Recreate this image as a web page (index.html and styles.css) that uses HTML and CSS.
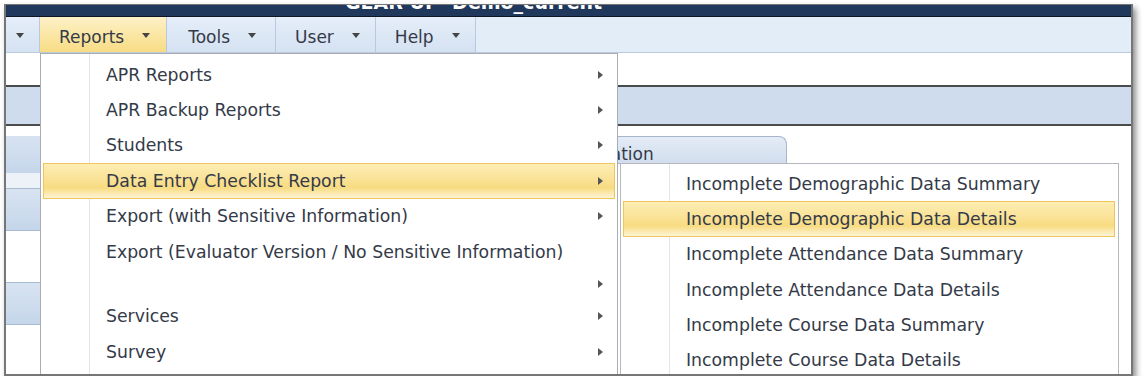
FILE: index.html
```html
<!DOCTYPE html>
<html lang="en">
<head>
    <meta charset="UTF-8">
    <meta name="viewport" content="width=device-width, initial-scale=1.0">
    <title>GEAR UP - Reports</title>
    <link rel="stylesheet" href="styles.css">
</head>
<body>
    <div class="window">
        <div class="titlebar"><span class="title">GEAR UP&nbsp; Demo_current</span></div>

        <div class="menubar">
            <div class="menu-item first"><span class="caret"></span></div>
            <div class="menu-item active"><span>Reports</span><span class="caret"></span></div>
            <div class="menu-item wide"><span>Tools</span><span class="caret"></span></div>
            <div class="menu-item"><span>User</span><span class="caret"></span></div>
            <div class="menu-item"><span>Help</span><span class="caret"></span></div>
        </div>

        <div class="content">
            <div class="strip"></div>
            <div class="band"></div>
            <div class="workspace">
                <div class="sidenav">
                    <div class="side-gap"></div>
                    <div class="side-btn tall"></div>
                    <div class="side-light"></div>
                    <div class="side-btn"></div>
                    <div class="side-blank"></div>
                    <div class="side-btn"></div>
                </div>
                <div class="main">
                    <div class="tabstrip">
                        <div class="tab">Student Information</div>
                    </div>
                    <div class="panel"></div>
                </div>
            </div>
        </div>

        <!-- Reports dropdown -->
        <ul class="dropdown reports-menu">
            <li><span class="label">APR Reports</span><span class="arrow"></span></li>
            <li><span class="label">APR Backup Reports</span><span class="arrow"></span></li>
            <li><span class="label">Students</span><span class="arrow"></span></li>
            <li class="hover"><span class="label">Data Entry Checklist Report</span><span class="arrow"></span></li>
            <li><span class="label">Export (with Sensitive Information)</span><span class="arrow"></span></li>
            <li><span class="label">Export (Evaluator Version / No Sensitive Information)</span></li>
            <li class="empty"><span class="label"></span><span class="arrow"></span></li>
            <li><span class="label">Services</span><span class="arrow"></span></li>
            <li><span class="label">Survey</span><span class="arrow"></span></li>
        </ul>

        <!-- Data Entry Checklist submenu -->
        <ul class="dropdown checklist-menu">
            <li><span class="label">Incomplete Demographic Data Summary</span></li>
            <li class="hover"><span class="label">Incomplete Demographic Data Details</span></li>
            <li><span class="label">Incomplete Attendance Data Summary</span></li>
            <li><span class="label">Incomplete Attendance Data Details</span></li>
            <li><span class="label">Incomplete Course Data Summary</span></li>
            <li><span class="label">Incomplete Course Data Details</span></li>
        </ul>
    </div>
</body>
</html>
```

FILE: styles.css
```css
body {
    margin: 0;
    background-color: white;
    font-family: "DejaVu Sans", Verdana, sans-serif;
    font-size: 17px;
    color: #343a48;
}
.window {
    position: relative;
    margin: 4px 0 0 4px;
    width: 1125px;
    height: 369px;
    border: 2px solid #767676;
    border-top-width: 1px;
    overflow: hidden;
    background-color: white;
    box-shadow: 3px 4px 6px rgba(0, 0, 0, 0.45);
}

/* title bar, only the bottom of the title shows */
.titlebar {
    height: 11px;
    padding-left: 339px;
    background-color: #1f385c;
    border-bottom: 1px solid #0c1626;
    overflow: hidden;
}
.title {
    display: block;
    margin-top: -12px;
    font-size: 19px;
    font-weight: bold;
    line-height: 19px;
    color: white;
    white-space: nowrap;
}

/* menu bar */
.menubar {
    display: flex;
    height: 35px;
    background-color: #e3edf8;
    border-bottom: 1px solid #bccadb;
}
.menu-item {
    display: flex;
    align-items: center;
    gap: 18px;
    padding: 4px 15px 0 19px;
    border-right: 1px solid #b9c8dc;
    background: linear-gradient(#e5eef9, #d5e2f2);
}
.menu-item.first {
    padding-left: 10px;
}
.menu-item.active {
    padding-right: 16px;
    background: linear-gradient(#fdf1c7, #f8dc84);
}
.menu-item.wide {
    padding-left: 21px;
    padding-right: 19px;
}
.caret {
    width: 0;
    height: 0;
    margin-bottom: 2px;
    border-left: 4px solid transparent;
    border-right: 4px solid transparent;
    border-top: 5px solid #454545;
}

/* page behind the menus */
.strip {
    height: 32px;
}
.band {
    height: 37px;
    background-color: #cfdcee;
    border-top: 2px solid #4b4b4b;
    border-bottom: 2px solid #4b4b4b;
}
.workspace {
    display: flex;
}
.sidenav {
    width: 34px;
    flex: none;
}
.side-gap {
    height: 10px;
}
.side-btn {
    height: 41px;
    background: linear-gradient(#d8e3f1, #c5d6ea);
    border-bottom: 1px solid #a8bbd2;
}
.side-btn.tall {
    height: 37px;
    border-bottom: none;
}
.side-light {
    height: 15px;
    background-color: #edf2f9;
    border-bottom: 1px solid #a8bbd2;
}
.side-blank {
    height: 51px;
    border-bottom: 1px solid #a8bbd2;
}
.main {
    flex: 1;
    padding-top: 10px;
}
.tabstrip {
    display: flex;
    padding-left: 420px;
}
.tab {
    height: 17px;
    padding: 9px 132px 0 22px;
    line-height: 17px;
    white-space: nowrap;
    border: 1px solid #a6b7cd;
    border-bottom: none;
    border-radius: 6px 8px 0 0;
    background: linear-gradient(#e3ebf6, #d2deee);
}
.panel {
    height: 220px;
    margin-right: 12px;
    border: 1px solid #a6b7cd;
}

/* dropdown menus */
.dropdown {
    position: absolute;
    margin: 0;
    padding: 3px 0 0;
    list-style: none;
    font-size: 17.3px;
    border: 1px solid #a9adb3;
    background: linear-gradient(to right, white 48px, #e2e5ea 48px, #e2e5ea 49px, white 49px);
}
.reports-menu {
    left: 34px;
    top: 48px;
    width: 576px;
    height: 330px;
}
.checklist-menu {
    left: 614px;
    top: 158px;
    width: 497px;
    height: 230px;
    padding-top: 2px;
    border-color: #b3b8bf;
}
.dropdown li {
    display: flex;
    align-items: center;
    box-sizing: border-box;
    height: 35.4px;
    margin: 0 2px;
    padding: 0 11px 0 62px;
    border: 1px solid transparent;
}
.checklist-menu li {
    height: 35.3px;
    margin-right: 3px;
}
.dropdown li.empty {
    height: 29.4px;
}
.dropdown li.hover {
    border-color: #f1c55e;
    background: linear-gradient(#fdeeb3 0%, #fae39a 40%, #f8dc82 70%, #fdf4d6 100%);
}
.label {
    flex: 1;
    white-space: nowrap;
}
.arrow {
    width: 0;
    height: 0;
    border-top: 4px solid transparent;
    border-bottom: 4px solid transparent;
    border-left: 5px solid #555;
}
```
